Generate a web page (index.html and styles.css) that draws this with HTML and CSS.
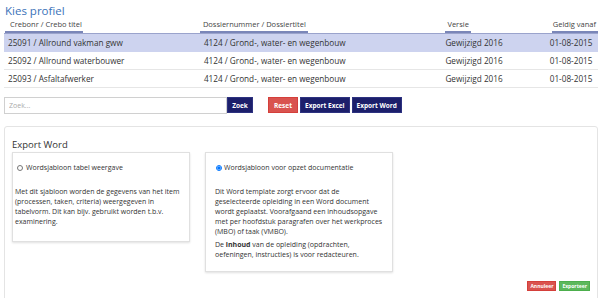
FILE: index.html
```html
<!DOCTYPE html>
<html>
<head>
    <meta charset="UTF-8">
    <title>Kies profiel</title>
    <link rel="stylesheet" href="styles.css">
</head>
<body>
<div class="page">
    <h2 class="title">Kies profiel</h2>
    <table class="grid">
        <thead>
        <tr>
            <th class="c1"><span>Crebonr / Crebo titel</span></th>
            <th class="c2"><span>Dossiernummer / Dossiertitel</span></th>
            <th class="c3"><span>Versie</span></th>
            <th class="c4"><span>Geldig vanaf</span></th>
        </tr>
        </thead>
        <tbody>
        <tr class="sel">
            <td>25091 / Allround vakman gww</td>
            <td>4124 / Grond-, water- en wegenbouw</td>
            <td>Gewijzigd 2016</td>
            <td>01-08-2015</td>
        </tr>
        <tr>
            <td>25092 / Allround waterbouwer</td>
            <td>4124 / Grond-, water- en wegenbouw</td>
            <td>Gewijzigd 2016</td>
            <td>01-08-2015</td>
        </tr>
        <tr>
            <td>25093 / Asfaltafwerker</td>
            <td>4124 / Grond-, water- en wegenbouw</td>
            <td>Gewijzigd 2016</td>
            <td>01-08-2015</td>
        </tr>
        </tbody>
    </table>

    <div class="search">
        <input type="text" class="zoek" placeholder="Zoek...">
        <button class="btn navy">Zoek</button>
        <button class="btn red reset">Reset</button>
        <button class="btn navy">Export Excel</button>
        <button class="btn navy">Export Word</button>
    </div>

    <div class="panel">
        <h3>Export Word</h3>
        <div class="cards">
            <div class="card">
                <label><input type="radio" name="tpl"> Wordsjabloon tabel weergave</label>
                <p>Met dit sjabloon worden de gegevens van het item<br>
                    (processen, taken, criteria) weergegeven in<br>
                    tabelvorm. Dit kan bijv. gebruikt worden t.b.v.<br>
                    examinering.</p>
            </div>
            <div class="card wide">
                <label><input type="radio" name="tpl" checked> Wordsjabloon voor opzet documentatie</label>
                <p>Dit Word template zorgt ervoor dat de<br>
                    geselecteerde opleiding in een Word document<br>
                    wordt geplaatst. Voorafgaand een inhoudsopgave<br>
                    met per hoofdstuk paragrafen over het werkproces<br>
                    (MBO) of taak (VMBO).</p>
                <p>De <b>inhoud</b> van de opleiding (opdrachten,<br>
                    oefeningen, instructies) is voor redacteuren.</p>
            </div>
        </div>
        <div class="actions">
            <button class="btn small red">Annuleer</button>
            <button class="btn small green">Exporteer</button>
        </div>
    </div>
</div>
</body>
</html>
```

FILE: styles.css
```css
* {
    margin: 0;
    padding: 0;
    box-sizing: border-box;
}

body {
    font-family: "Open Sans", "Noto Sans", sans-serif;
    font-size: 7.5px;
    color: #333;
    background: #fff;
}

.page {
    padding: 3px 0 0 4px;
}

.title {
    font-size: 11.5px;
    font-weight: normal;
    color: #3b73b9;
    padding-left: 1px;
    height: 15px;
    line-height: 15px;
}

/* tabel met profielen */
.grid {
    width: 100%;
    border-collapse: collapse;
}

.grid th {
    text-align: left;
    font-weight: normal;
    font-size: 7.5px;
    color: #444;
    height: 15px;
    vertical-align: bottom;
    white-space: nowrap;
    padding: 0;
}

.grid th span {
    display: inline-block;
    padding: 0 2px 2px 2px;
    border-bottom: 2px solid #7a86b8;
}

.grid .c1 { width: 197px; }
.grid .c2 { width: 247px; }
.grid .c3 { width: 105px; }

.grid th.c1 { padding-left: 1px; }
.grid th.c1 span { padding-left: 5px; padding-right: 1px; }
.grid th.c2 span { padding-left: 3px; }
.grid th.c3 { padding-left: 0; }
.grid th.c4 { padding-left: 2px; }
.grid th.c4 span { padding-left: 1px; }

.grid td {
    height: 18px;
    font-size: 8.2px;
    padding: 0 0 0 4px;
    border-bottom: 1px solid #e6e6e6;
    white-space: nowrap;
}

.grid td:nth-child(3),
.grid td:nth-child(4) { padding-left: 0; }

.grid tr.sel td {
    background: #cdd3ef;
    border-top: 1px solid #9aa3cc;
    border-bottom: 1px solid #cdd3ef;
}

/* zoekbalk */
.search {
    display: flex;
    align-items: center;
    margin-top: 9px;
    height: 17px;
}

.zoek {
    width: 223px;
    height: 17px;
    border: 1px solid #d0d0d0;
    font-family: inherit;
    font-size: 7px;
    padding-left: 4px;
    color: #999;
}

.zoek::placeholder {
    color: #aaa;
}

.btn {
    font-family: inherit;
    font-size: 6.5px;
    font-weight: bold;
    color: #fff;
    border: 1px solid transparent;
    height: 16px;
    padding: 0 4px;
    cursor: pointer;
}

.navy {
    background: #1c1f6b;
    border-color: #2d3280;
}

.red {
    background: #d9534f;
    border-color: #d43f3a;
}

.green {
    background: #5cb85c;
    border-color: #4cae4c;
}

.search .btn + .btn {
    margin-left: 2px;
}

.search .zoek + .btn {
    width: 26px;
    padding: 0;
}

.search .btn.reset {
    margin-left: 15px;
    width: 30px;
    padding: 0;
}

/* export paneel */
.panel {
    margin-top: 12px;
    border: 1px solid #e4e4e4;
    border-radius: 3px;
    padding: 11px 7px 6px 7px;
    height: 182px;
}

.panel h3 {
    font-size: 9.5px;
    font-weight: normal;
    color: #333;
    height: 14px;
    line-height: 14px;
}

.cards {
    display: flex;
    align-items: flex-start;
    gap: 15px;
}

.card {
    width: 178px;
    border: 1px solid #e0e0e0;
    box-shadow: 0 1px 2px rgba(0, 0, 0, 0.12);
    padding: 10px 4px 14px 2px;
    font-size: 7px;
}

.card.wide {
    width: 188px;
    padding-left: 9px;
    padding-bottom: 11px;
}

.card label {
    display: flex;
    align-items: center;
    gap: 3px;
    height: 10px;
    font-size: 7px;
    padding-left: 2px;
}

.card.wide label {
    padding-left: 1px;
    gap: 2px;
}

.card input[type=radio] {
    width: 6px;
    height: 6px;
    margin: 0;
}

.card p {
    margin-top: 14px;
    line-height: 10.2px;
    white-space: nowrap;
}

.card p + p {
    margin-top: 2px;
}

.actions {
    display: flex;
    justify-content: flex-end;
    gap: 3px;
    margin-top: 9px;
}

.btn.small {
    height: 10px;
    padding: 0 2px;
    font-size: 5px;
    line-height: 8px;
}
```
